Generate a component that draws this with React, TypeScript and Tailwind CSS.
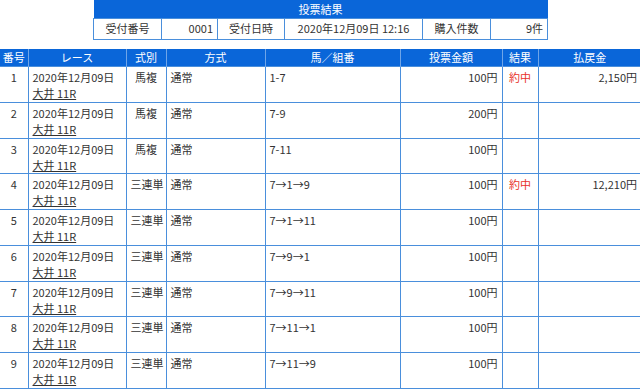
const rows = [
  { no: 1, type: '馬複', combo: '1-7', amount: '100円', result: '約中', payout: '2,150円' },
  { no: 2, type: '馬複', combo: '7-9', amount: '200円', result: '', payout: '' },
  { no: 3, type: '馬複', combo: '7-11', amount: '100円', result: '', payout: '' },
  { no: 4, type: '三連単', combo: '7→1→9', amount: '100円', result: '約中', payout: '12,210円' },
  { no: 5, type: '三連単', combo: '7→1→11', amount: '100円', result: '', payout: '' },
  { no: 6, type: '三連単', combo: '7→9→1', amount: '100円', result: '', payout: '' },
  { no: 7, type: '三連単', combo: '7→9→11', amount: '100円', result: '', payout: '' },
  { no: 8, type: '三連単', combo: '7→11→1', amount: '100円', result: '', payout: '' },
  { no: 9, type: '三連単', combo: '7→11→9', amount: '100円', result: '', payout: '' }
]

const th = 'bg-[#0a66d9] text-white font-normal border-x border-[#6fa5e8] h-[18px] p-0 leading-[16px] text-center whitespace-nowrap'
const td = 'border border-[#4a8fdc] align-top pt-[2px] px-[4px] leading-[16px] whitespace-nowrap'
const infoTd = 'border border-[#4a8fdc] py-0 whitespace-nowrap'

export default function App() {
  return (
    <div
      className="w-[640px] h-[390px] overflow-hidden bg-white text-[11px] text-[#333]"
      style={{ fontFamily: '"Noto Sans CJK JP", "Noto Sans", sans-serif' }}
    >
      <div className="pl-[93px]">
        <table className="w-[454px] border-collapse table-fixed">
          <colgroup>
            <col className="w-[68px]" />
            <col className="w-[56px]" />
            <col className="w-[67px]" />
            <col className="w-[138px]" />
            <col className="w-[68px]" />
            <col className="w-[57px]" />
          </colgroup>
          <thead>
            <tr>
              <th colSpan={6} className="bg-[#0a66d9] text-white font-normal h-[18px] p-0 leading-[16px] text-center">
                投票結果
              </th>
            </tr>
          </thead>
          <tbody>
            <tr className="h-[21px]">
              <td className={`${infoTd} text-center px-0`}>受付番号</td>
              <td className={`${infoTd} text-right pr-[4px]`}>0001</td>
              <td className={`${infoTd} text-center px-0`}>受付日時</td>
              <td className={`${infoTd} text-center px-0`}>2020年12月09日 12:16</td>
              <td className={`${infoTd} text-center px-0`}>購入件数</td>
              <td className={`${infoTd} text-right pr-[4px]`}>9件</td>
            </tr>
          </tbody>
        </table>
      </div>

      <table className="mt-[9px] w-[641px] border-collapse table-fixed">
        <colgroup>
          <col className="w-[28px]" />
          <col className="w-[98px]" />
          <col className="w-[40px]" />
          <col className="w-[99px]" />
          <col className="w-[135px]" />
          <col className="w-[102px]" />
          <col className="w-[36px]" />
          <col className="w-[103px]" />
        </colgroup>
        <thead>
          <tr>
            <th className={`${th} border-l-0`}>番号</th>
            <th className={th}>レース</th>
            <th className={th}>式別</th>
            <th className={th}>方式</th>
            <th className={th}>馬／組番</th>
            <th className={th}>投票金額</th>
            <th className={th}>結果</th>
            <th className={`${th} border-r-0`}>払戻金</th>
          </tr>
        </thead>
        <tbody>
          {rows.map(r => (
            <tr key={r.no} className="h-[35.75px]">
              <td className={`${td} text-center border-l-0`}>{r.no}</td>
              <td className={td}>
                <div>2020年12月09日</div>
                <div><span className="underline">大井 11R</span></div>
              </td>
              <td className={`${td} text-center px-0`}>{r.type}</td>
              <td className={td}>通常</td>
              <td className={td}>{r.combo}</td>
              <td className={`${td} text-right`}>{r.amount}</td>
              <td className={`${td} text-center text-[#e8332a]`}>{r.result}</td>
              <td className={`${td} text-right border-r-0`}>{r.payout}</td>
            </tr>
          ))}
        </tbody>
      </table>
    </div>
  )
}
